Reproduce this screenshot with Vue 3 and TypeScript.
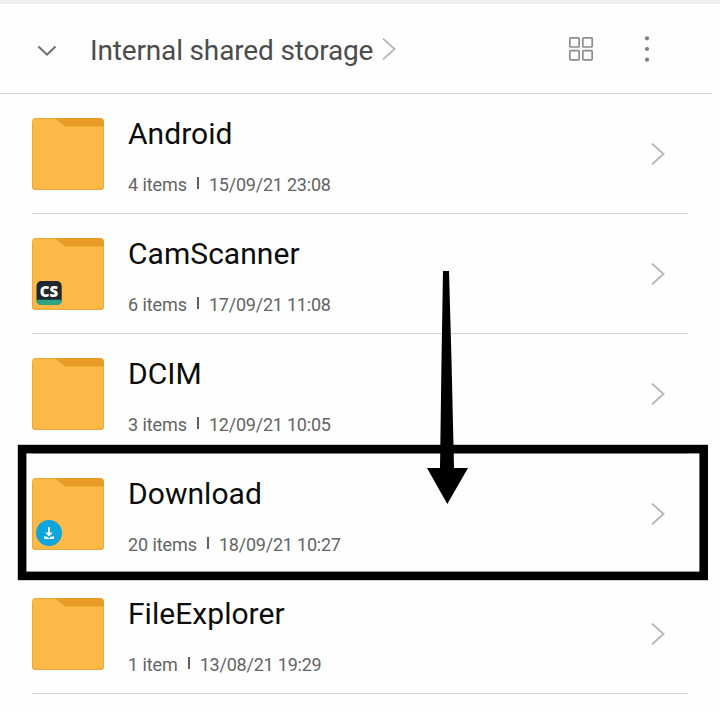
<script setup lang="ts">
interface Folder {
  name: string
  count: string
  date: string
  badge?: 'cs' | 'download'
}

const folders: Folder[] = [
  { name: 'Android', count: '4 items', date: '15/09/21 23:08' },
  { name: 'CamScanner', count: '6 items', date: '17/09/21 11:08', badge: 'cs' },
  { name: 'DCIM', count: '3 items', date: '12/09/21 10:05' },
  { name: 'Download', count: '20 items', date: '18/09/21 10:27', badge: 'download' },
  { name: 'FileExplorer', count: '1 item', date: '13/08/21 19:29' },
]
</script>

<template>
  <main class="screen">
    <div class="status-edge"></div>
    <header class="header">
      <svg class="collapse" width="20" height="12" viewBox="0 0 20 12">
        <path d="M1.5 1.5 10 9.6 18.5 1.5" fill="none" stroke="#6c6c6c" stroke-width="1.9" />
      </svg>
      <h1 class="title">Internal shared storage</h1>
      <svg class="crumb" width="14" height="24" viewBox="0 0 14 24">
        <path d="M1 1.6 12.6 12 1 22.4" fill="none" stroke="#b4b4b4" stroke-width="1.8" />
      </svg>
      <svg class="grid-icon" width="26" height="26" viewBox="0 0 26 26">
        <g fill="none" stroke="#8c8c8c" stroke-width="1.7">
          <rect x="1.8" y="1.8" width="9.4" height="9.2" rx="1" />
          <rect x="14.8" y="1.8" width="9.4" height="9.2" rx="1" />
          <rect x="1.8" y="14.6" width="9.4" height="9.2" rx="1" />
          <rect x="14.8" y="14.6" width="9.4" height="9.2" rx="1" />
        </g>
      </svg>
      <svg class="more" width="6" height="28" viewBox="0 0 6 28">
        <g fill="#808080">
          <circle cx="3" cy="3.3" r="2.1" />
          <circle cx="3" cy="14" r="2.1" />
          <circle cx="3" cy="24.7" r="2.1" />
        </g>
      </svg>
    </header>

    <ul class="list">
      <li v-for="folder in folders" :key="folder.name" class="row">
        <svg class="folder" width="72" height="72" viewBox="0 0 72 72">
          <rect x="0" y="0" width="72" height="72" rx="4" fill="#e89c25" />
          <path
            d="M4 .6H23.5L32 7.4Q33.3 8.6 35 8.6H72V68Q72 72 68 72H4Q0 72 0 68V4.6Q0 .6 4 .6Z"
            fill="#fdb948"
          />
          <path
            d="M.4 5V67.6Q.4 71.6 4.4 71.6H67.6Q71.6 71.6 71.6 67.6V9"
            fill="none"
            stroke="#e0a03c"
            stroke-width=".8"
          />
          <g v-if="folder.badge === 'cs'">
            <rect x="4.5" y="43" width="25.2" height="24" rx="5" fill="#1f272d" />
            <path d="M4.5 61.8H29.7V62Q29.7 67 24.7 67H9.5Q4.5 67 4.5 62Z" fill="#2fa386" />
            <text class="cs" x="17" y="58.7" text-anchor="middle">CS</text>
          </g>
          <g v-else-if="folder.badge === 'download'">
            <circle cx="17" cy="55" r="13" fill="#0ea5db" />
            <path d="M16.1 49.3H17.9V54.6H20.8L17 58.6 13.2 54.6H16.1Z" fill="#fff" />
            <path d="M12 58.4H14.6L17 60.2 19.4 58.4H22V60.9H12Z" fill="#fff" />
          </g>
        </svg>
        <div class="info">
          <div class="name">{{ folder.name }}</div>
          <div class="meta">
            <span class="count">{{ folder.count }}</span>
            <i class="bar"></i>
            <span class="date">{{ folder.date }}</span>
          </div>
        </div>
        <svg class="chevron" width="14" height="24" viewBox="0 0 14 24">
          <path d="M1 1.6 12.6 12 1 22.4" fill="none" stroke="#b4b4b4" stroke-width="1.8" />
        </svg>
      </li>
    </ul>

    <svg class="annotation" width="720" height="712" viewBox="0 0 720 712">
      <rect x="22.1" y="449.1" width="681.6" height="126.8" fill="none" stroke="#000" stroke-width="8.6" />
      <path d="M443 271H449L451.5 360 454 468H468L447.3 504 427 468H440L441.5 360Z" fill="#000" />
    </svg>
  </main>
</template>

<style>
body {
  margin: 0;
  background: #fff;
}
</style>

<style scoped>
.screen {
  position: relative;
  width: 720px;
  height: 712px;
  overflow: hidden;
  background: #fefefe;
  font-family: Roboto, "Liberation Sans", sans-serif;
}
.status-edge {
  height: 4px;
  background: #eeeeee;
}
.header {
  display: flex;
  align-items: center;
  box-sizing: border-box;
  width: 712px;
  height: 90px;
  padding: 0 62px 0 37px;
  border-bottom: 1px solid #d4d4d4;
}
.collapse {
  margin-top: 4px;
}
.title {
  width: 284px;
  margin: 5px 0 0 33px;
  font-size: 28px;
  font-weight: 400;
  line-height: 34px;
  letter-spacing: -0.16px;
  white-space: nowrap;
  color: #4c4c4c;
}
.crumb {
  margin-left: 8px;
}
.grid-icon {
  margin-left: auto;
}
.more {
  margin-left: 50px;
}
.list {
  margin: 0;
  padding: 0 32px;
  list-style: none;
}
.row {
  display: flex;
  align-items: flex-start;
  box-sizing: border-box;
  height: 120px;
  border-bottom: 1px solid #d4d4d4;
}
.folder {
  margin-top: 24px;
}
.cs {
  font-family: "Open Sans", sans-serif;
  font-size: 15px;
  font-weight: 800;
  fill: #fff;
}
.info {
  flex: 1;
  padding: 22px 0 0 24px;
}
.name {
  font-size: 30px;
  line-height: 36px;
  letter-spacing: 0.04px;
  color: #0c0c0c;
}
.meta {
  display: flex;
  margin-top: 22px;
  font-size: 18px;
  line-height: 22px;
  color: #646464;
}
.count {
  letter-spacing: -0.08px;
}
.date {
  letter-spacing: -0.22px;
}
.bar {
  width: 2px;
  height: 12px;
  margin: 3px 10px 0;
  background: #606060;
}
.chevron {
  margin: 48px 23px 0 0;
}
.annotation {
  position: absolute;
  inset: 0;
}
</style>
